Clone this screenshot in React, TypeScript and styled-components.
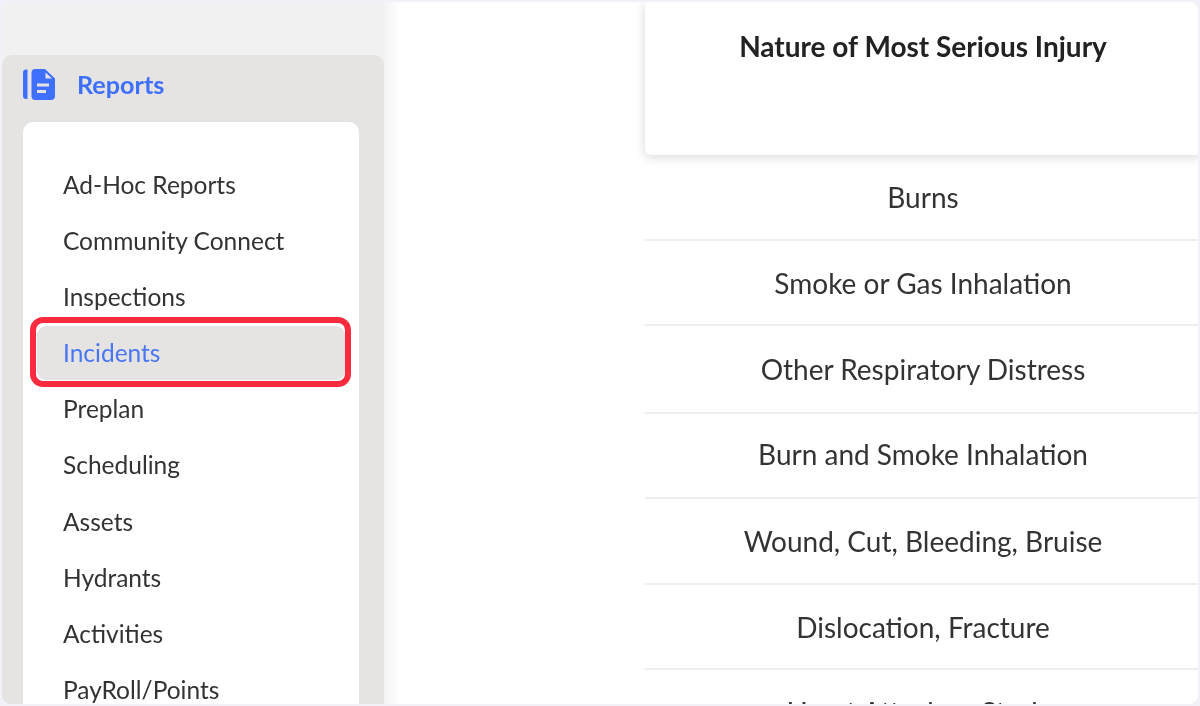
import React from "react";
import styled, { createGlobalStyle } from "styled-components";

const Global = createGlobalStyle`
  html, body { margin: 0; padding: 0; height: 100%; background: #f1f1f7; }
  body { font-family: Lato, "Open Sans", sans-serif; overflow: hidden; }
  #root { height: 100%; }
`;

const Frame = styled.div`
  box-sizing: border-box;
  width: 1200px;
  height: 706px;
  padding: 2px;
  background: #f1f1f7;
`;

const Window = styled.div`
  display: flex;
  width: 100%;
  height: 100%;
  overflow: hidden;
  border-radius: 9px;
  background: #fff;
  filter: blur(0.5px);
`;

const Sidebar = styled.aside`
  display: flex;
  flex-direction: column;
  flex: 0 0 382px;
  padding-top: 53px;
  box-sizing: border-box;
  background: #f1f1f2;
  overflow: hidden;
`;

const Section = styled.section`
  flex: 1;
  min-height: 0;
  display: flex;
  flex-direction: column;
  padding: 0 25px 0 21px;
  background: #e5e4e3;
  border-radius: 10px 10px 0 0;
`;

const SectionHeader = styled.header`
  display: flex;
  align-items: center;
  gap: 22px;
  height: 58px;
  margin-bottom: 9px;
  flex: none;
  color: #3f6fff;
  font-size: 25.2px;
  font-weight: 700;
`;

const Card = styled.nav`
  flex: 1;
  min-height: 0;
  padding: 35px 14px 0;
  background: #fff;
  border-radius: 10px 10px 0 0;
  overflow: hidden;
`;

const Item = styled.div<{ $active?: boolean }>`
  display: flex;
  align-items: center;
  box-sizing: border-box;
  height: 54px;
  margin-bottom: 2.2px;
  padding-left: 26px;
  font-size: 24.5px;
  color: ${(p) => (p.$active ? "#4a76f6" : "#333")};
  position: relative;
  ${(p) => p.$active && `
    background: #e5e4e3;
    border-radius: 9px;
    &::after {
      content: "";
      position: absolute;
      inset: -9px -6px -7px -7px;
      border: 6px solid #fb2b3f;
      border-radius: 13px;
      pointer-events: none;
    }
  `}
`;

const Main = styled.main`
  flex: 1;
  min-width: 0;
  padding-left: 261px;
  background: linear-gradient(90deg, #f3f3f3 0, #fff 16px);
  overflow: hidden;
`;

const Column = styled.div`
  width: 556px;
`;

const HeaderCell = styled.div`
  box-sizing: border-box;
  height: 153px;
  padding-top: 26px;
  text-align: center;
  font-size: 28px;
  font-weight: 700;
  line-height: 36px;
  color: #222;
  background: #fff;
  border-radius: 0 0 6px 6px;
  box-shadow: 0 2px 12px rgba(0, 0, 0, 0.16);
  position: relative;
`;

const Row = styled.div<{ $h: number; $lift?: number }>`
  display: flex;
  align-items: center;
  justify-content: center;
  box-sizing: border-box;
  height: ${(p) => p.$h}px;
  padding-bottom: ${(p) => p.$lift ?? 0}px;
  border-bottom: 2px solid #eeeef1;
  font-size: 28px;
  color: #333;
`;

const ReportIcon = () => (
  <svg width="32" height="31" viewBox="0 0 32 31" fill="#3f6fff" style={{ flex: "none" }}>
    <path d="M3 .5H4.5V30H3C1.2 30 0 28.8 0 27V3.5C0 1.7 1.2 .5 3 .5Z" />
    <path
      fillRule="evenodd"
      d="M12 0H22L32 9.5V27C32 29.5 30.5 31 28 31H12C10 31 8.5 29.5 8.5 27V4C8.5 1.5 10 0 12 0ZM22.5 3.5V9.5H29ZM14 14.5H26V17.5H14ZM14 21H23V24H14Z"
    />
  </svg>
);

const items = [
  "Ad-Hoc Reports",
  "Community Connect",
  "Inspections",
  "Incidents",
  "Preplan",
  "Scheduling",
  "Assets",
  "Hydrants",
  "Activities",
  "PayRoll/Points",
];

const rows: { t: string; h: number; lift?: number }[] = [
  { t: "Burns", h: 86 },
  { t: "Smoke or Gas Inhalation", h: 85 },
  { t: "Other Respiratory Distress", h: 88 },
  { t: "Burn and Smoke Inhalation", h: 85, lift: 4 },
  { t: "Wound, Cut, Bleeding, Bruise", h: 86 },
  { t: "Dislocation, Fracture", h: 85 },
  { t: "Heart Attack or Stroke", h: 85 },
];

export default function App() {
  return (
    <Frame>
      <Global />
      <Window>
        <Sidebar>
          <Section>
            <SectionHeader>
              <ReportIcon />
              Reports
            </SectionHeader>
            <Card>
              {items.map((t) => (
                <Item key={t} $active={t === "Incidents"}>
                  {t}
                </Item>
              ))}
            </Card>
          </Section>
        </Sidebar>
        <Main>
          <Column>
            <HeaderCell>Nature of Most Serious Injury</HeaderCell>
            {rows.map((r) => (
              <Row key={r.t} $h={r.h} $lift={r.lift}>
                {r.t}
              </Row>
            ))}
          </Column>
        </Main>
      </Window>
    </Frame>
  );
}
